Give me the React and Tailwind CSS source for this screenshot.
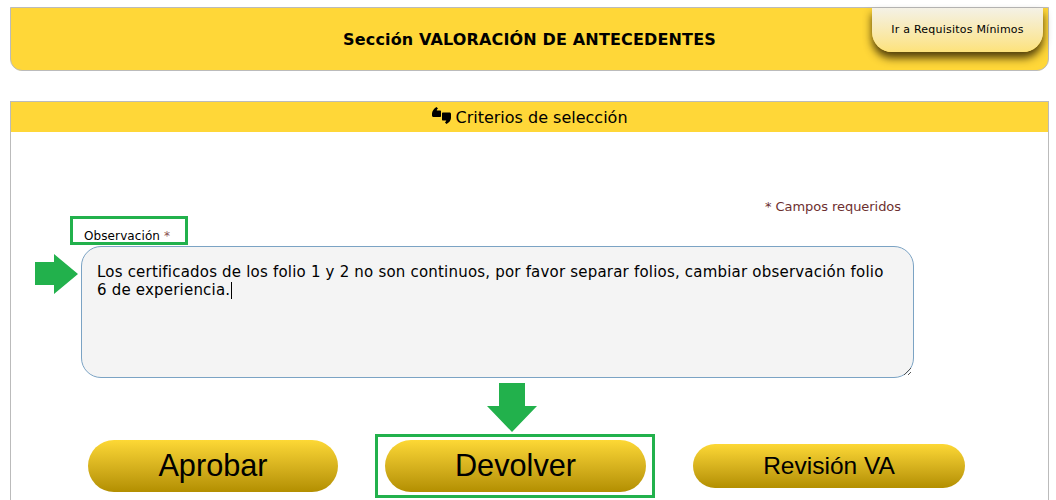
export default function App() {
  return (
    <div className="relative h-[500px] w-[1056px] overflow-hidden bg-white font-['Verdana','DejaVu_Sans',sans-serif] text-black">
      <div className="px-[10px] pt-[7px] w-[1059px]">
        <header className="relative flex h-[64px] w-[1039px] items-center justify-center rounded-b-[12px] border border-[#bbbbbb] bg-[#ffd738]">
          <h1 className="mt-[1px] text-[16px] font-bold leading-none tracking-[0.15px]">Sección VALORACIÓN DE ANTECEDENTES</h1>
          <a className="absolute right-[5px] top-0 flex h-[44px] w-[171px] items-center justify-center rounded-b-[20px] bg-gradient-to-b from-[#f4f1e6] to-[#fde27a] text-[11px] tracking-[0.23px] shadow-[0_6px_8px_rgba(50,35,0,0.85)]">
            Ir a Requisitos Mínimos
          </a>
        </header>

        <section className="mt-[30px] h-[420px] w-[1039px] border border-[#bbbbbb]">
          <div className="flex h-[30px] items-center justify-center gap-[5px] bg-[#ffd738] text-[16px]">
            <svg width="19" height="17" viewBox="0 0 19 17" className="-mt-[3px] translate-x-[1px]">
              <path d="M0 6.5 C0 4 2 1.5 4.5 0 L6 1.6 C5 2.4 4.8 3 4.8 3.4 L8 3.4 C8.6 3.4 9 3.8 9 4.4 L9 9 C9 9.6 8.6 10 8 10 L1.5 10 C0.6 10 0 9.4 0 8.5 Z" fill="#000" />
              <path d="M19 11 C19 13.5 17 15.5 14.5 17 L13 15.4 C14 14.6 14.2 14 14.2 13.6 L11 13.6 C10.4 13.6 10 13.2 10 12.6 L10 6.5 C10 5.9 10.4 5.5 11 5.5 L17.5 5.5 C18.4 5.5 19 6.1 19 7 Z" fill="#000" />
            </svg>
            <span className="mt-[1px]">Criterios de selección</span>
          </div>

          <div className="relative pl-[70px] pt-[66px]">
            <p className="pr-[147px] text-right text-[13px] leading-[18px] tracking-[-0.05px] text-[#6d2f2f]">* Campos requeridos</p>
            <label className="mt-[12px] block pl-[3px] text-[12px] leading-[16px] tracking-[0.1px]">
              Observación <span className="text-[#8a5050]">*</span>
            </label>
            <div className="relative mt-[2px] h-[132px] w-[833px] rounded-[20px] border border-[#7ba3c4] bg-[#f4f4f4] pl-[15px] pr-[20px] pt-[16px] text-[15px] leading-[18px] tracking-[0.2px]">
              Los certificados de los folio 1 y 2 no son continuos, por favor separar folios, cambiar observación folio 6 de experiencia.
              <span className="ml-[1px] -mb-[4px] inline-block h-[17px] w-px bg-black" />
              <svg width="10" height="10" viewBox="0 0 10 10" className="absolute bottom-[1px] right-[1px]">
                <path d="M9 2 L2 9 M9 6 L6 9" stroke="#555" strokeWidth="1" />
              </svg>
            </div>
          </div>

          <div className="flex items-center pl-[77px] pt-[62px]">
            <button className="h-[52px] w-[250px] rounded-full bg-gradient-to-b from-[#fdd835] to-[#b38f00] font-['Liberation_Sans',sans-serif] text-[30.7px]">Aprobar</button>
            <button className="ml-[47px] h-[52px] w-[261px] rounded-full bg-gradient-to-b from-[#fdd835] to-[#b38f00] font-['Liberation_Sans',sans-serif] text-[30.7px]">Devolver</button>
            <button className="ml-[47px] h-[44px] w-[272px] rounded-full bg-gradient-to-b from-[#fdd835] to-[#b38f00] font-['Liberation_Sans',sans-serif] text-[24.5px]">Revisión VA</button>
          </div>
        </section>
      </div>

      {/* annotations */}
      <div className="absolute left-[70px] top-[216px] h-[29px] w-[118px] border-[3px] border-[#22b14c]" />
      <div className="absolute left-[375px] top-[434px] h-[64px] w-[280px] border-[3px] border-[#22b14c]" />
      <svg className="absolute left-[35px] top-[254px]" width="43" height="40" viewBox="0 0 43 40">
        <path d="M0 8 H19 V0 L43 20 L19 40 V31 H0 Z" fill="#22b14c" />
      </svg>
      <svg className="absolute left-[487px] top-[383px]" width="50" height="49" viewBox="0 0 50 49">
        <path d="M12 0 H38 V23 H50 L25 49 L0 23 H12 Z" fill="#22b14c" />
      </svg>
    </div>
  );
}
